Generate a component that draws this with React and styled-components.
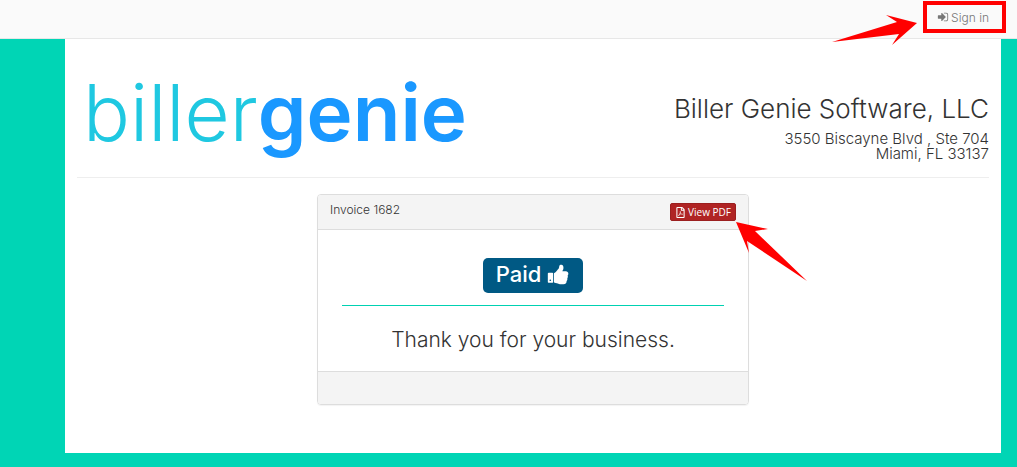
import React from "react";
import styled, { createGlobalStyle } from "styled-components";
import { FaRegFilePdf } from "react-icons/fa";

function SignInIcon() {
  return (
    <svg width="12" height="12" viewBox="0 0 1792 1792" fill="currentColor" aria-hidden="true">
      <path d="M1312 896q0 26-19 45l-544 544q-19 19-45 19t-45-19-19-45v-288h-448q-26 0-45-19t-19-45v-384q0-26 19-45t45-19h448v-288q0-26 19-45t45-19 45 19l544 544q19 19 19 45zm352-352v704q0 119-84.500 203.500t-203.500 84.500h-320q-13 0-22.500-9.500t-9.500-22.500q0-4-1-20t-.5-26.500 3-23.500 10-19.500 20.500-6.500h320q66 0 113-47t47-113v-704q0-66-47-113t-113-47h-312l-11.500-1-11.500-3-8-5.500-7-9-2-13.500q0-4-1-20t-.5-26.500 3-23.500 10-19.500 20.500-6.500h320q119 0 203.500 84.500t84.500 203.500z" />
    </svg>
  );
}

function ThumbsUpIcon() {
  return (
    <svg width="23" height="23" viewBox="0 0 1792 1792" fill="currentColor" aria-hidden="true">
      <path d="M320 1344q0-26-19-45t-45-19q-27 0-45.500 19t-18.500 45q0 27 18.500 45.500t45.500 18.500q26 0 45-18.500t19-45.500zm160-512v640q0 26-19 45t-45 19h-288q-26 0-45-19t-19-45v-640q0-26 19-45t45-19h288q26 0 45 19t19 45zm1184 0q0 86-55 149 15 44 15 76 3 76-43 137 17 56 0 117-15 57-54 94 9 112-49 181-64 76-197 78h-129q-66 0-144-15.500t-121.500-29-120.500-39.500q-123-43-158-44-26-1-45-19.500t-19-44.500v-641q0-25 18-43.500t43-20.500q24-2 76-59t101-121q68-87 101-120 18-18 31-48t17.500-48.500 13.500-60.500q7-39 12.500-61t19.500-52 34-50q19-19 45-19 46 0 82.500 10.500t60 26 40 40.500 24 45 12 50 5 45 .5 39q0 38-9.500 76t-19 60-27.500 56q-3 6-10 18t-11 22-8 24h277q78 0 135 57t57 135z" />
    </svg>
  );
}

function App() {
  return (
    <>
      <GlobalStyle />
      <Navbar>
        <Highlight>
          <SignInLink href="#signin">
            <SignInIcon />
            Sign in
          </SignInLink>
          <SignInArrow width="86" height="32" viewBox="0 0 86 32" aria-hidden="true">
            <polygon points="0,28 65,8 54,1 85,9 60,31 67,20" fill="#ff0000" />
          </SignInArrow>
        </Highlight>
      </Navbar>

      <Page>
        <Header>
          <Logo>
            biller<strong>genie</strong>
          </Logo>
          <Company>
            <CompanyName>Biller Genie Software, LLC</CompanyName>
            <Address>
              <span>3550 Biscayne Blvd , Ste 704</span>
              <span>Miami, FL 33137</span>
            </Address>
          </Company>
        </Header>

        <Panel>
          <PanelHeading>
            <PanelTitle>Invoice 1682</PanelTitle>
            <PdfAnchor>
              <PdfButton type="button">
                <FaRegFilePdf size={11} />
                View PDF
              </PdfButton>
              <PdfArrow width="72" height="60" viewBox="0 0 72 60" aria-hidden="true">
                <polygon points="0,0 32,7 19,9 71,59 11,19 13,31" fill="#ff0000" />
              </PdfArrow>
            </PdfAnchor>
          </PanelHeading>
          <PanelBody>
            <PaidLabel>
              Paid
              <ThumbsUpIcon />
            </PaidLabel>
            <Divider />
            <Message>Thank you for your business.</Message>
          </PanelBody>
          <PanelFooter />
        </Panel>
      </Page>
    </>
  );
}

export default App;

const GlobalStyle = createGlobalStyle`
  * {
    box-sizing: border-box;
  }

  body {
    margin: 0;
    background-color: #00d5b5;
    color: #333333;
    font-family: Inter, "Liberation Sans", sans-serif;
    font-size: 12px;
    font-weight: 300;
  }
`;

const Navbar = styled.nav`
  display: flex;
  justify-content: flex-end;
  align-items: flex-start;
  height: 39px;
  padding: 1px 11px 0;
  background-color: #fafafa;
  border-bottom: 1px solid #e7e7e7;
`;

const Highlight = styled.div`
  position: relative;
  border: 4px solid #ff0000;
`;

const SignInLink = styled.a`
  display: flex;
  align-items: center;
  gap: 2px;
  height: 24px;
  padding: 0 13px 0 10px;
  color: #777777;
  font-size: 12px;
  text-decoration: none;
`;

const SignInArrow = styled.svg`
  position: absolute;
  top: 9px;
  right: 84px;
`;

const Page = styled.main`
  margin: 0 16px 14px 65px;
  padding: 24px 12px 48px;
  background-color: #ffffff;
`;

const Header = styled.header`
  display: flex;
  justify-content: space-between;
  align-items: center;
  height: 115px;
  margin-bottom: 16px;
  padding-left: 6px;
  border-bottom: 1px solid #eeeeee;
`;

const Logo = styled.div`
  padding-bottom: 14px;
  color: #1fc8e1;
  font-size: 78px;
  font-weight: 300;
  line-height: 80px;

  strong {
    color: #1a98ff;
    font-weight: 600;
  }
`;

const Company = styled.div`
  text-align: right;
`;

const CompanyName = styled.h3`
  margin: 16px 0 8px;
  font-size: 26px;
  font-weight: 300;
  line-height: 28px;
`;

const Address = styled.address`
  display: flex;
  flex-direction: column;
  font-size: 15px;
  font-style: normal;
  line-height: 15px;
`;

const Panel = styled.section`
  max-width: 432px;
  margin: 0 auto;
  border: 1px solid #dddddd;
  border-radius: 4px;
  box-shadow: 0 1px 1px rgba(0, 0, 0, 0.05);
`;

const PanelHeading = styled.div`
  display: flex;
  justify-content: space-between;
  align-items: center;
  height: 35px;
  padding: 0 12px;
  background-color: #f4f4f4;
  border-bottom: 1px solid #dddddd;
  border-radius: 3px 3px 0 0;
`;

const PanelTitle = styled.span`
  font-size: 12px;
  line-height: 16px;
  padding-bottom: 4px;
`;

const PdfAnchor = styled.div`
  position: relative;
`;

const PdfButton = styled.button`
  display: flex;
  align-items: center;
  gap: 2px;
  height: 18px;
  padding: 0 4px;
  color: #ffffff;
  background-color: #b02424;
  border: 1px solid #9b1f1f;
  border-radius: 2px;
  font-family: "Open Sans", sans-serif;
  font-size: 10px;
  font-weight: 500;
`;

const PdfArrow = styled.svg`
  position: absolute;
  top: 19px;
  left: 100%;
`;

const PanelBody = styled.div`
  padding: 28px 24px 17px;
  text-align: center;
`;

const PaidLabel = styled.span`
  display: inline-flex;
  align-items: center;
  gap: 6px;
  height: 35px;
  padding: 0 13px 3px;
  color: #ffffff;
  background-color: #005984;
  border-radius: 5px;
  font-size: 22px;
  font-weight: 500;
  vertical-align: top;
`;

const Divider = styled.hr`
  margin: 12px 0 20px;
  border: 0;
  border-top: 1px solid #00d1b2;
`;

const Message = styled.p`
  margin: 0;
  font-size: 21px;
  line-height: 28px;
`;

const PanelFooter = styled.div`
  height: 33px;
  background-color: #f4f4f4;
  border-top: 1px solid #dddddd;
  border-radius: 0 0 3px 3px;
`;
